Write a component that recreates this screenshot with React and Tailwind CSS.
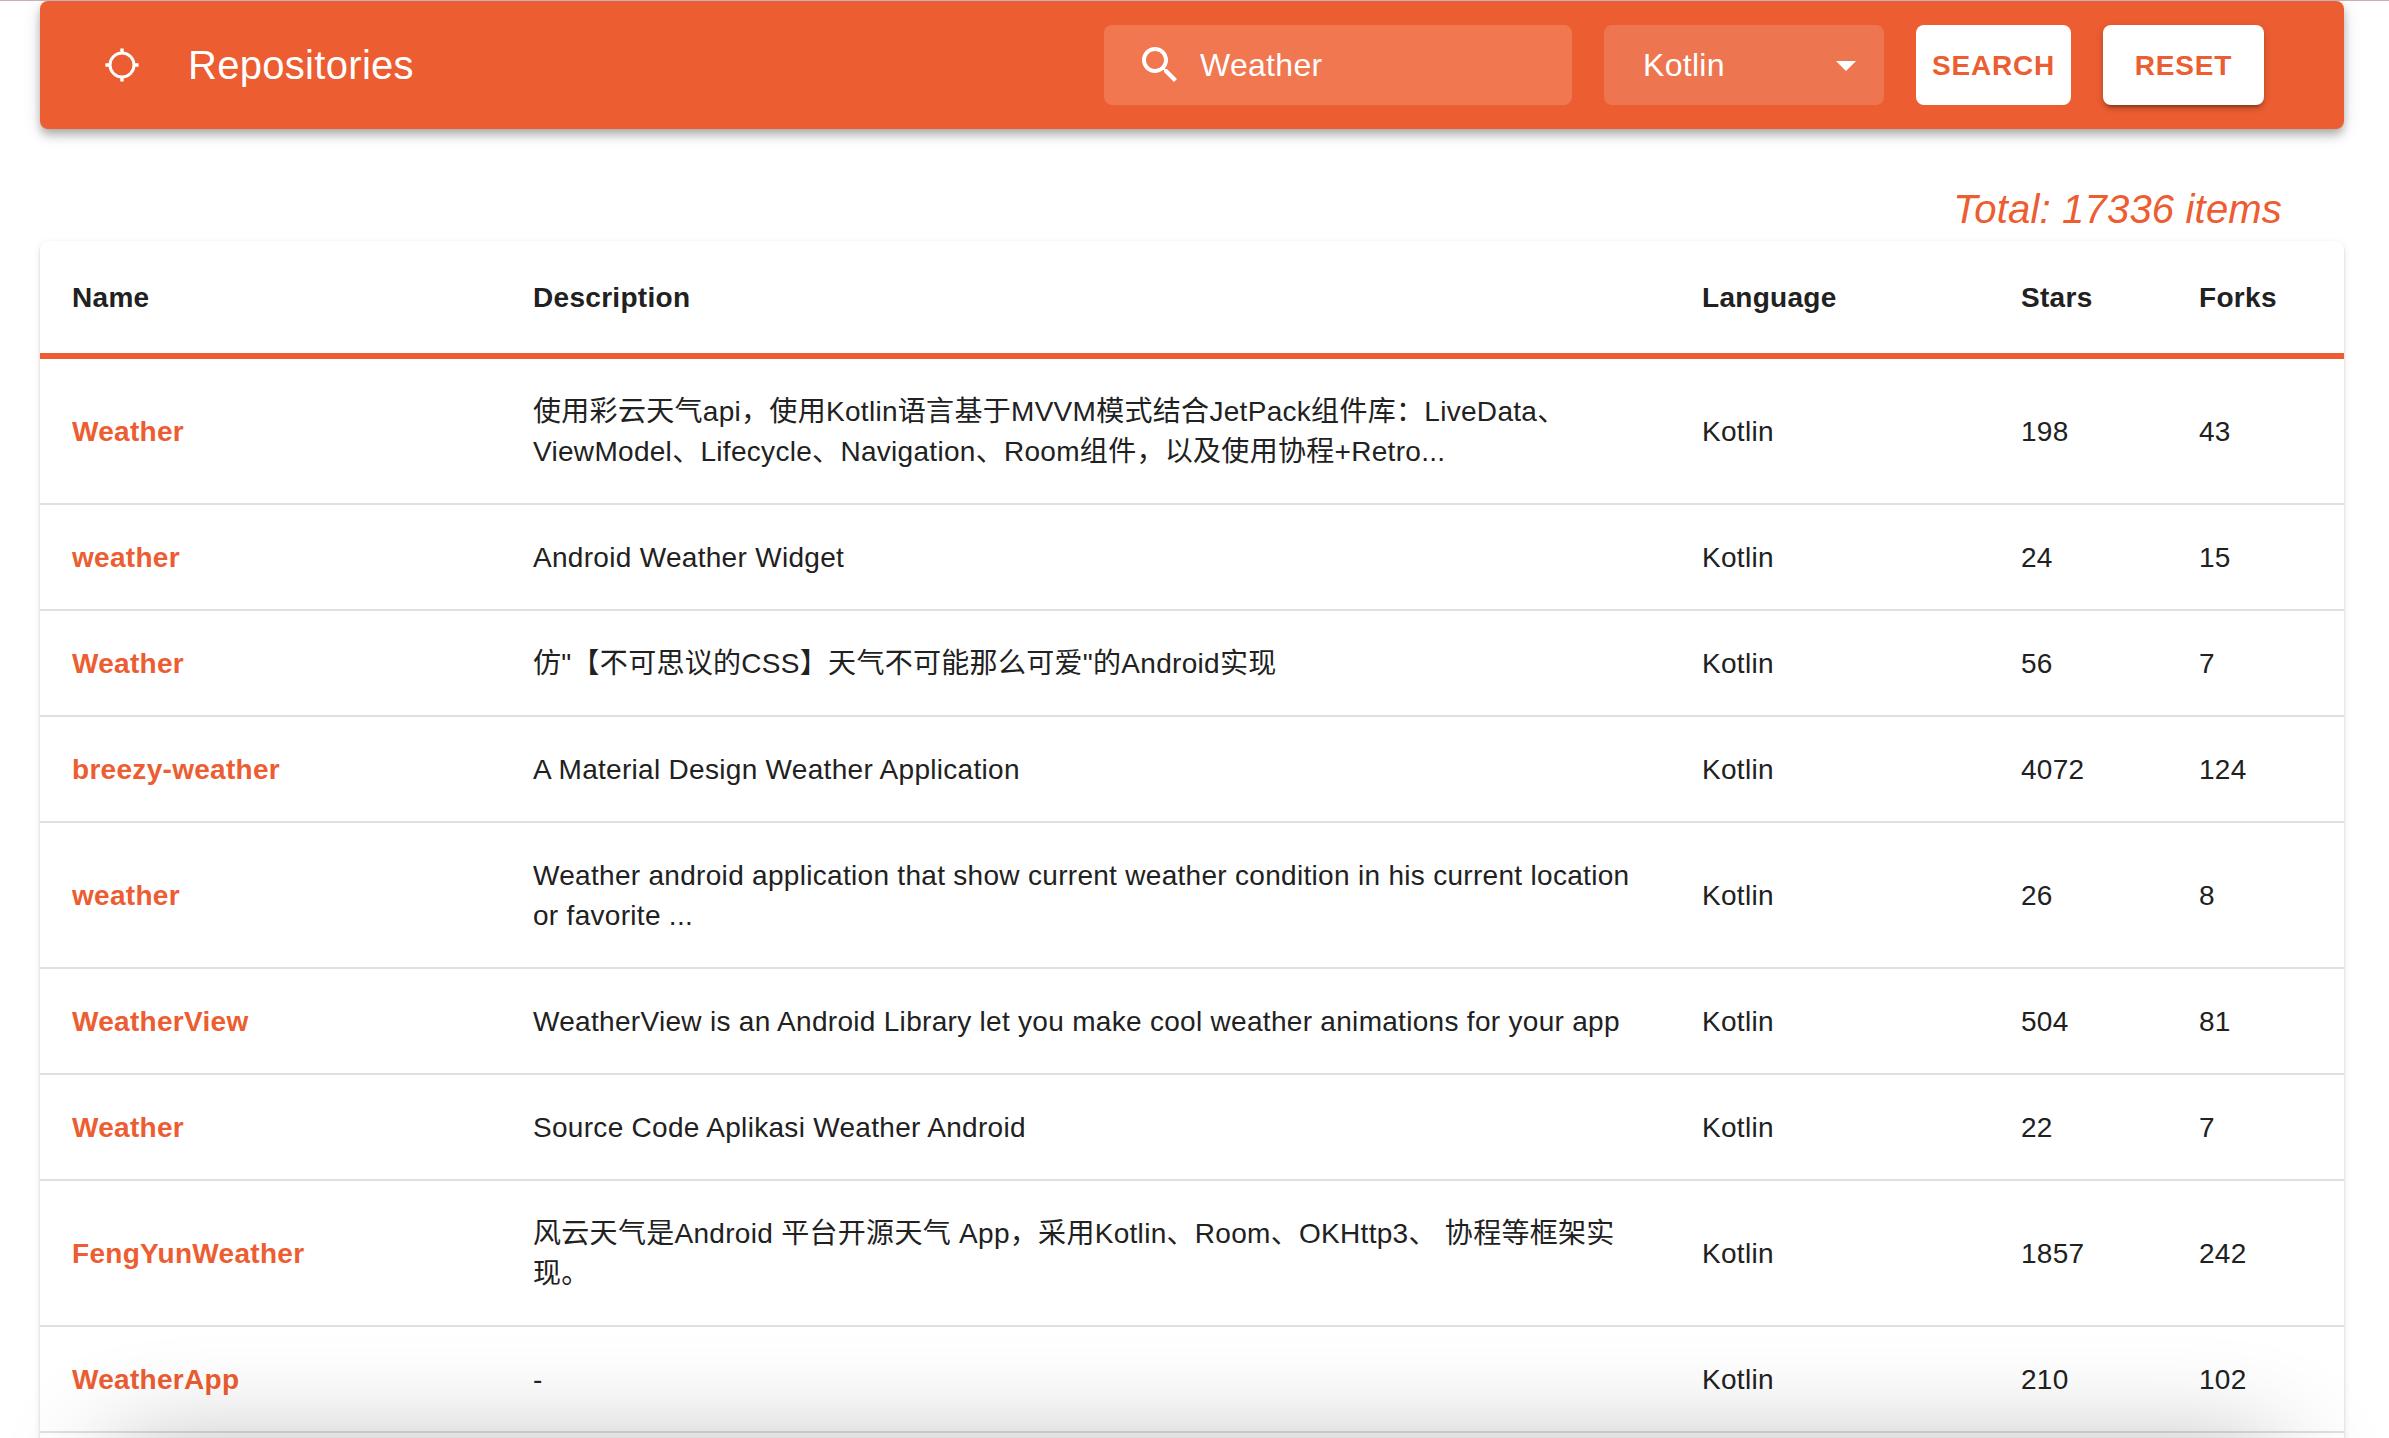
const rows = [
  ["Weather", ["使用彩云天气api，使用Kotlin语言基于MVVM模式结合JetPack组件库：LiveData、", "ViewModel、Lifecycle、Navigation、Room组件，以及使用协程+Retro..."], 198, 43],
  ["weather", ["Android Weather Widget"], 24, 15],
  ["Weather", ['仿"【不可思议的CSS】天气不可能那么可爱"的Android实现'], 56, 7],
  ["breezy-weather", ["A Material Design Weather Application"], 4072, 124],
  ["weather", ["Weather android application that show current weather condition in his current location", "or favorite ..."], 26, 8],
  ["WeatherView", ["WeatherView is an Android Library let you make cool weather animations for your app"], 504, 81],
  ["Weather", ["Source Code Aplikasi Weather Android"], 22, 7],
  ["FengYunWeather", ["风云天气是Android 平台开源天气 App，采用Kotlin、Room、OKHttp3、 协程等框架实", "现。"], 1857, 242],
  ["WeatherApp", ["-"], 210, 102],
];

function Header() {
  return (
    <header className="flex h-32 items-center rounded-lg bg-[#ec5d31] pr-20 pl-[58px] text-white shadow-[0_4px_8px_-2px_rgba(0,0,0,0.2),0_8px_10px_0_rgba(0,0,0,0.14),0_2px_20px_0_rgba(0,0,0,0.12)]">
      <svg className="size-12 shrink-0" viewBox="0 0 48 48" fill="none" stroke="currentColor">
        <circle cx="24" cy="24" r="12" strokeWidth="3" />
        <path d="M24 7.4v4M24 36.6v4M7.4 24h4M36.6 24h4" strokeWidth="3.4" />
      </svg>
      <h1 className="ml-[42px] grow text-[40px] leading-[64px] tracking-[0.0075em]">Repositories</h1>
      <div className="flex h-20 w-[468px] items-center rounded-lg bg-[#f07750] pl-8">
        <svg className="size-12" viewBox="0 0 24 24" fill="currentColor">
          <path d="M15.5 14h-.79l-.28-.27C15.41 12.59 16 11.11 16 9.5 16 5.91 13.09 3 9.5 3S3 5.91 3 9.5 5.91 16 9.5 16c1.61 0 3.09-.59 4.23-1.57l.27.28v.79l5 4.99L20.49 19l-4.99-5zm-6 0C7.01 14 5 11.99 5 9.5S7.01 5 9.5 5 14 7.01 14 9.5 11.99 14 9.5 14z" />
        </svg>
        <span className="ml-4 text-[32px] tracking-[0.00938em]">Weather</span>
      </div>
      <div className="ml-8 flex h-20 w-[280px] items-center justify-between rounded-lg bg-[#ed7650] pr-3.5 pl-[39px]">
        <span className="text-[32px] tracking-[0.00938em]">Kotlin</span>
        <svg className="size-12" viewBox="0 0 24 24" fill="currentColor">
          <path d="M7 10l5 5 5-5z" />
        </svg>
      </div>
      <button className="ml-8 h-20 w-[155px] rounded-lg bg-white pt-0.5 text-[28px] font-bold tracking-[0.02857em] text-[#ec5d31]">SEARCH</button>
      <button className="ml-8 h-20 w-[161px] rounded-lg bg-white pt-0.5 text-[28px] font-bold tracking-[0.02857em] text-[#ec5d31] shadow-[0_6px_2px_-4px_rgba(0,0,0,0.2),0_4px_4px_0_rgba(0,0,0,0.14),0_2px_10px_0_rgba(0,0,0,0.12)]">RESET</button>
    </header>
  );
}

export default function App() {
  return (
    <div className="relative h-[1438px] overflow-hidden border-t border-[#c8b0b8] bg-white px-10 pr-[45px] font-['Liberation_Sans','Noto_Sans_CJK_SC',sans-serif] text-[#212121]">
      <Header />
      <p className="mt-12 pr-[62px] text-right text-[40px] leading-[64px] tracking-[0.0045em] text-[#ec5d31] italic">Total: 17336 items</p>
      <div className="h-[1400px] rounded-lg bg-white shadow-[0_4px_2px_-2px_rgba(0,0,0,0.2),0_2px_2px_0_rgba(0,0,0,0.14),0_2px_6px_0_rgba(0,0,0,0.12)]">
        <table className="w-full table-fixed border-separate border-spacing-0 text-left text-[28px] tracking-[0.01071em]">
          <colgroup>
            <col className="w-[461px]" />
            <col className="w-[1169px]" />
            <col className="w-[319px]" />
            <col className="w-[178px]" />
            <col />
          </colgroup>
          <thead>
            <tr>
              {["Name", "Description", "Language", "Stars", "Forks"].map((title) => (
                <th key={title} className="border-b-[6px] border-[#ec5d31] px-8 pt-[33px] pb-[31px] leading-[48px] font-bold">{title}</th>
              ))}
            </tr>
          </thead>
          <tbody>
            {rows.map(([name, lines, stars, forks], i) => (
              <tr key={i} className="[&>td]:border-b-2 [&>td]:border-[#e0e0e0] [&>td]:px-8 [&>td]:pt-[33px] [&>td]:pb-[31px] [&>td]:leading-10">
                <td className="font-bold text-[#ec5d31]">{name}</td>
                <td>
                  {lines.map((line) => (
                    <div key={line} className="h-10 whitespace-nowrap">{line}</div>
                  ))}
                </td>
                <td>Kotlin</td>
                <td>{stars}</td>
                <td>{forks}</td>
              </tr>
            ))}
          </tbody>
        </table>
      </div>
      <div className="pointer-events-none absolute top-[1450px] left-[110px] h-[200px] w-[2169px] rounded-[20px] shadow-[0_0_110px_0_rgba(0,0,0,0.3)]" />
    </div>
  );
}
